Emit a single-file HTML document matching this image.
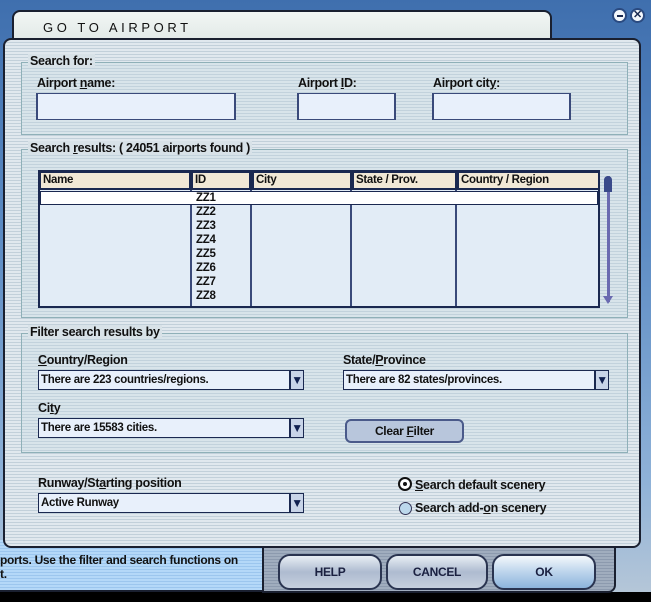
<!DOCTYPE html>
<html><head><style>
*{margin:0;padding:0;box-sizing:border-box}
body{width:651px;height:602px;overflow:hidden;position:relative;background:linear-gradient(180deg,#3f6fae 0%,#5d8cc4 40%,#8fb2d8 80%,#b8c8d8 100%);font-family:"Liberation Sans Narrow","Liberation Sans",sans-serif;font-weight:bold;font-size:12px;color:#111;letter-spacing:-0.3px}
.a{position:absolute}
.stripe{background:repeating-linear-gradient(180deg,#e0e8ee 0 2px,#c2d0da 2px 3px)}
.fs{position:absolute;border:1px solid #8fb0b8;background:repeating-linear-gradient(180deg,#d8e4ea 0 2px,#c2d2dc 2px 3px)}
.lg{position:absolute;background:#d8e2e8;padding:0 2px;font-size:12.5px;line-height:14px}
.in{position:absolute;background:#e8f0fb;border:1px solid #3a4a7a;border-left:2px solid #3a4a7a;border-right:2px solid #3a4a7a}
.lb{position:absolute;font-size:12.5px;line-height:14px}
.sel{position:absolute;background:#e8f0fb;border:1px solid #1a2850;font-size:11.5px;line-height:18px;padding-left:2px}
.sel b{position:absolute;right:0;top:0;width:14px;height:18px;background:#c8d4e8;border-left:2px solid #1a2850;color:#102050;font-size:12px;text-align:center;line-height:18px}
.th{position:absolute;top:171px;height:19px;background:#f1e8d6;border:2px solid #1a2850;border-left-width:3px;font-size:11.5px;line-height:15px;padding-left:2px}
.btn{position:absolute;top:554px;height:36px;border:2px solid #2a3450;border-radius:12px;background:linear-gradient(180deg,#e8eef4,#aebbd0 50%,#c6d0de);text-align:center;line-height:32px;font-size:12px;color:#1a2040}
</style></head><body>
<div class="a" style="left:612px;top:8px;width:15px;height:15px;border-radius:50%;background:#f4f8fc;border:2px solid #2a4a80"><div class="a" style="left:3px;top:5px;width:6px;height:2px;background:#1a2a50"></div></div>
<div class="a" style="left:630px;top:8px;width:15px;height:15px;border-radius:50%;background:#f4f8fc;border:2px solid #2a4a80;font-size:11px;line-height:11px;text-align:center;color:#1a2a50">✕</div>
<div class="a" style="left:12px;top:10px;width:540px;height:40px;background:linear-gradient(180deg,#f2f6f4,#dde6e4);border:2px solid #1a2030;border-radius:8px 8px 0 0"></div>
<div class="a" style="left:43px;top:20px;font-family:'Liberation Sans',sans-serif;font-weight:normal;font-size:13px;letter-spacing:3.6px;color:#111">GO TO AIRPORT</div>
<div class="a" style="left:0;top:592px;width:651px;height:10px;background:#000"></div>
<div class="a" style="left:0;top:540px;width:262px;height:52px;background:repeating-linear-gradient(180deg,#b4d8f8 0 2px,#9cc6ee 2px 3px);border-bottom:2px solid #1a2030"></div>
<div class="a" style="left:262px;top:540px;width:354px;height:53px;background:repeating-linear-gradient(180deg,#a0adbe 0 2px,#8c9aae 2px 3px);border:2px solid #1a2030;border-radius:0 0 8px 0"></div>
<div class="a" style="left:0;top:553px;font-size:12px;line-height:14px;color:#111">ports. Use the filter and search functions on<br>t.</div>
<div class="btn" style="left:278px;width:104px">HELP</div>
<div class="btn" style="left:386px;width:102px">CANCEL</div>
<div class="btn" style="left:492px;width:104px;background:linear-gradient(180deg,#f4f8fc,#bcd4ec 50%,#8cb4dc)">OK</div>
<div class="a stripe" style="left:3px;top:38px;width:638px;height:510px;border:2px solid #1a2030;border-radius:8px"></div>
<div class="fs" style="left:21px;top:62px;width:607px;height:73px"></div>
<div class="lg" style="left:28px;top:54px">Search for:</div>
<div class="lb" style="left:37px;top:76px">Airport <u>n</u>ame:</div>
<div class="lb" style="left:298px;top:76px">Airport <u>I</u>D:</div>
<div class="lb" style="left:433px;top:76px">Airport cit<u>y</u>:</div>
<div class="in" style="left:36px;top:93px;width:200px;height:27px"></div>
<div class="in" style="left:297px;top:93px;width:99px;height:27px"></div>
<div class="in" style="left:432px;top:93px;width:139px;height:27px"></div>
<div class="fs" style="left:21px;top:149px;width:607px;height:169px"></div>
<div class="lg" style="left:28px;top:141px">Search <u>r</u>esults: ( 24051 airports found )</div>
<div class="a" style="left:38px;top:170px;width:562px;height:138px;background:#e2ecf6;border:2px solid #1a2850"></div>
<div class="a" style="left:190px;top:190px;width:2px;height:116px;background:#3a4a7a"></div>
<div class="a" style="left:250px;top:190px;width:2px;height:116px;background:#3a4a7a"></div>
<div class="a" style="left:350px;top:190px;width:2px;height:116px;background:#3a4a7a"></div>
<div class="a" style="left:455px;top:190px;width:2px;height:116px;background:#3a4a7a"></div>
<div class="a" style="left:40px;top:191px;width:558px;height:14px;background:#fff;border:1px solid #1a2850"></div>
<div class="th" style="left:38px;width:153px">Name</div>
<div class="th" style="left:190px;width:61px">ID</div>
<div class="th" style="left:251px;width:101px">City</div>
<div class="th" style="left:351px;width:106px">State / Prov.</div>
<div class="th" style="left:456px;width:144px">Country / Region</div>
<div class="a" style="left:196px;top:191px;font-size:11.5px;line-height:14px">ZZ1<br>ZZ2<br>ZZ3<br>ZZ4<br>ZZ5<br>ZZ6<br>ZZ7<br>ZZ8</div>
<div class="a" style="left:607px;top:176px;width:3px;height:126px;background:#6a6ab0"></div>
<div class="a" style="left:604px;top:176px;width:8px;height:16px;background:#3a4a8a;border-radius:4px 4px 0 0"></div>
<div class="a" style="left:603px;top:296px;width:0;height:0;border-left:5px solid transparent;border-right:5px solid transparent;border-top:8px solid #6a6ab0"></div>
<div class="fs" style="left:21px;top:333px;width:607px;height:120px"></div>
<div class="lg" style="left:28px;top:325px">Filter search results by</div>
<div class="lb" style="left:38px;top:353px"><u>C</u>ountry/Region</div>
<div class="lb" style="left:343px;top:353px">State/<u>P</u>rovince</div>
<div class="sel" style="left:38px;top:370px;width:266px;height:20px">There are 223 countries/regions.<b>▼</b></div>
<div class="sel" style="left:343px;top:370px;width:266px;height:20px">There are 82 states/provinces.<b>▼</b></div>
<div class="lb" style="left:38px;top:401px">Ci<u>t</u>y</div>
<div class="sel" style="left:38px;top:418px;width:266px;height:20px">There are 15583 cities.<b>▼</b></div>
<div class="a" style="left:345px;top:419px;width:119px;height:24px;border:2px solid #4a5a8a;border-radius:6px;background:#b8c6dc;text-align:center;line-height:20px;font-size:12px">Clear <u>F</u>ilter</div>
<div class="lb" style="left:38px;top:476px">Runway/St<u>a</u>rting position</div>
<div class="sel" style="left:38px;top:493px;width:266px;height:20px">Active Runway<b>▼</b></div>
<div class="a" style="left:398px;top:477px;width:14px;height:14px;border-radius:50%;border:2px solid #111;background:#fff"><div class="a" style="left:3px;top:3px;width:4px;height:4px;border-radius:50%;background:#111"></div></div>
<div class="lb" style="left:415px;top:478px"><u>S</u>earch default scenery</div>
<div class="a" style="left:399px;top:502px;width:13px;height:13px;border-radius:50%;border:1px solid #335;background:#bcd8ec"></div>
<div class="lb" style="left:415px;top:501px">Search add-<u>o</u>n scenery</div>
</body></html>
